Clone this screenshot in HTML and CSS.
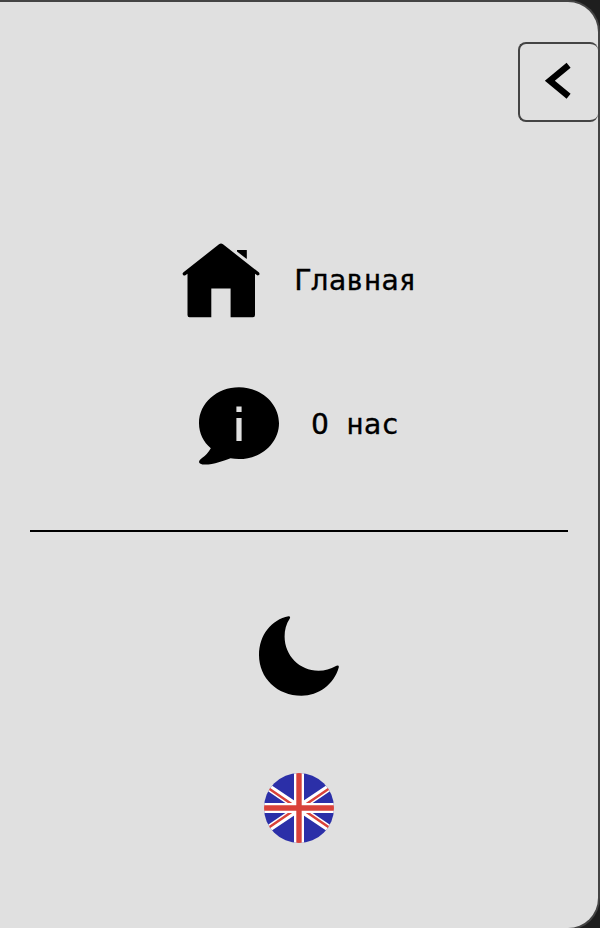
FILE: index.html
```html
<!DOCTYPE html>
<html lang="ru">
<head>
<meta charset="utf-8">
<title>Меню</title>
<link rel="stylesheet" href="styles.css">
</head>
<body>
<aside class="sidebar">
  <button class="collapse" aria-label="Закрыть меню">
    <svg width="78" height="76" viewBox="520 44 78 76"><path class="chevron" d="M568.6 65.2L549.8 80.7L568.6 96.2"/></svg>
  </button>
  <nav class="nav">
    <a class="item">
      <svg width="80" height="80" viewBox="182 241 80 80">
        <path d="M219 244.3Q221 242.6 223 244.3L259 272.5Q260 274 259 275L257.5 275.5L255 273.7V315Q255 317.2 253 317.2H230.6V288.5H211.3V317.2H189.5Q187.5 317.2 187.5 315V273.7L185 275.5Q183 276 182.6 274Q182.4 273 183.5 272.2Z"/>
        <path d="M237 250H246.8V259L237 251.6Z"/>
      </svg>
      <span class="label">Главная</span>
    </a>
    <a class="item">
      <svg width="80" height="80" viewBox="199 386 80 80">
        <path d="M239 387.3C261 387.3 279 403.2 279 423.2S261 459 239 459Q234.5 459 230.5 458.2C224 460.5 214 464.6 205 464.6Q199 464.6 199 461.8Q199 460 202 458Q207 455 210.8 448.3C203.5 442 199 433.2 199 423.2C199 403.2 217 387.3 239 387.3Z"/>
        <path class="cutout" d="M236.4 406.5H241.6V412H236.4ZM236.4 418H241.6V441H236.4Z"/>
      </svg>
      <span class="label label-about">О нас</span>
    </a>
  </nav>
  <hr class="divider">
  <div class="settings">
    <svg width="80" height="80" viewBox="259 616 80 80"><path d="M288.5 616.2Q290.8 616.1 289.8 618.5C286 624 284.6 630 284.6 636.5C284.6 655.5 299.5 670.7 318.5 670.7C325 670.7 330 669 336.5 665.7Q339.2 665 338.8 667.2C334 684.5 318.5 695.7 301.5 695.7C277 695.7 259 678 259 655C259 635 271.5 619.5 288.5 616.2Z"/></svg>
    <svg class="flag" width="70" height="70" viewBox="0 0 70 70">
      <defs><clipPath id="disc"><circle cx="35" cy="35" r="35"/></clipPath></defs>
      <g clip-path="url(#disc)">
        <path fill="#2b2fa8" d="M0 0H70V70H0Z"/>
        <path class="saltire" d="M-5 8L35 35L75 8M-5 62L35 35L75 62"/>
        <path class="saltire-red" d="M3 14.2L29 32M67 14.2L41 32M3 55.8L29 38M67 55.8L41 38"/>
        <path fill="#fff" d="M30 0H40V30H70V40H40V70H30V40H0V30H30Z"/>
        <path fill="#d9423a" d="M32.3 0H37.7V32.3H70V37.7H37.7V70H32.3V37.7H0V32.3H32.3Z"/>
      </g>
    </svg>
  </div>
</aside>
</body>
</html>
```
FILE: styles.css
```css
* { box-sizing: border-box; }
html, body { margin: 0; height: 100%; overflow: hidden; background: #1e1e1e; }
svg { display: block; flex: none; }
.sidebar {
  width: 600px;
  height: 930px;
  display: flex;
  flex-direction: column;
  border: 2px solid #444;
  border-left: 0;
  border-radius: 0 32px 32px 0;
  background: #e0e0e0;
  padding-top: 40px;
}
.collapse {
  width: 80px;
  height: 80px;
  flex: none;
  align-self: flex-end;
  padding: 0;
  border: 2px solid #444;
  border-right: 0;
  border-radius: 8px;
  background: none;
}
.chevron { fill: none; stroke: #000; stroke-width: 6.3; }
.nav {
  display: flex;
  flex-direction: column;
  gap: 65px;
  margin-top: 119px;
}
.item {
  display: flex;
  align-items: center;
  justify-content: center;
  gap: 32px;
  height: 80px;
  color: #000;
  font: 29px/80px "DejaVu Sans Mono", monospace;
}
.label {
  margin-top: -3px;
  -webkit-text-stroke: 0.3px #000;
}
.label-about { margin-top: -5px; }
.cutout { fill: #e0e0e0; }
.divider {
  width: 538px;
  height: 2px;
  flex: none;
  margin: 64px 30px 0;
  border: 0;
  background: #000;
}
.settings {
  display: flex;
  flex-direction: column;
  align-items: center;
  gap: 77px;
  margin-top: 84px;
}
.saltire { fill: none; stroke: #fff; stroke-width: 7; }
.saltire-red { fill: none; stroke: #d9423a; stroke-width: 2.5; }
```
